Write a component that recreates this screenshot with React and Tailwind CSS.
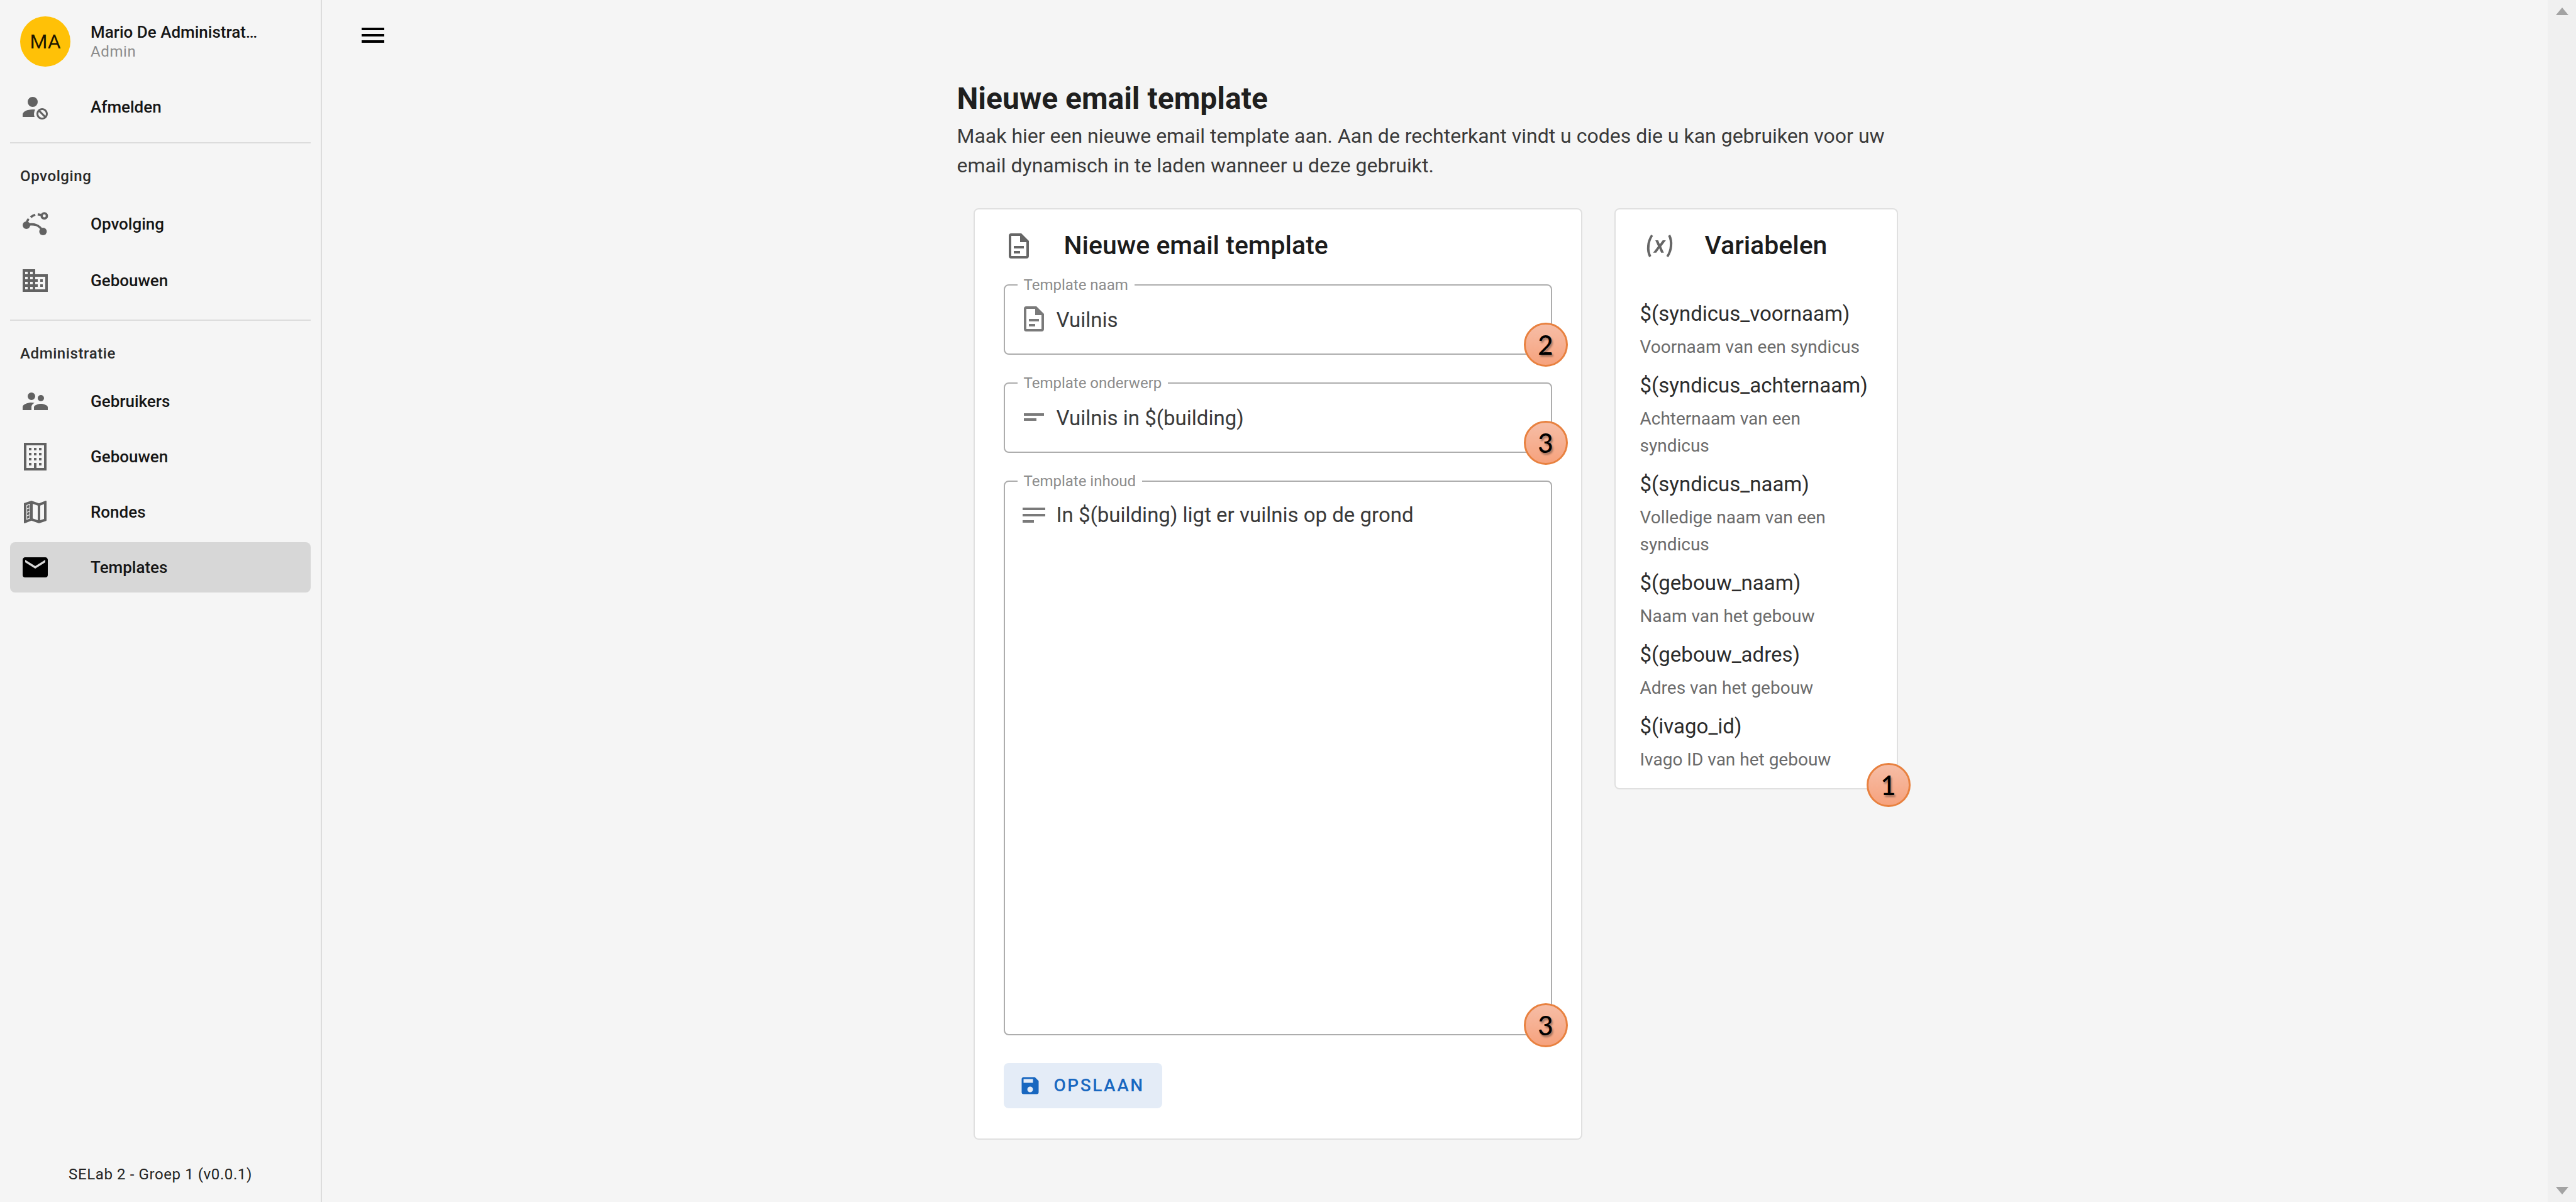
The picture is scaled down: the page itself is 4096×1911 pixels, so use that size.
import { useState } from "react";

const paths = {
  menu: "M3,6H21V8H3V6M3,11H21V13H3V11M3,16H21V18H3V16Z",
  accountCancel:
    "M10 4A4 4 0 0 0 6 8A4 4 0 0 0 10 12A4 4 0 0 0 14 8A4 4 0 0 0 10 4M17.5 13C15 13 13 15 13 17.5C13 20 15 22 17.5 22C20 22 22 20 22 17.5C22 15 20 13 17.5 13M10 14C5.58 14 2 15.79 2 18V20H11.5A6.5 6.5 0 0 1 11 17.5A6.5 6.5 0 0 1 11.95 14.14C11.32 14.06 10.68 14 10 14M17.5 14.5C19.16 14.5 20.5 15.84 20.5 17.5C20.5 18.06 20.35 18.58 20.08 19L16 14.92C16.42 14.65 16.94 14.5 17.5 14.5M14.92 16L19 20.08C18.58 20.35 18.06 20.5 17.5 20.5C15.84 20.5 14.5 19.16 14.5 17.5C14.5 16.94 14.65 16.42 14.92 16Z",
  domain:
    "M18,15H16V17H18M18,11H16V13H18M20,19H12V17H14V15H12V13H14V11H12V9H20M10,7H8V5H10M10,11H8V9H10M10,15H8V13H10M10,19H8V17H10M6,7H4V5H6M6,11H4V9H6M6,15H4V13H6M6,19H4V17H6M12,7V3H2V21H22V7H12Z",
  supervisor:
    "M16.5,12A2.5,2.5 0 0,0 19,9.5A2.5,2.5 0 0,0 16.5,7A2.5,2.5 0 0,0 14,9.5A2.5,2.5 0 0,0 16.5,12M9,11A3,3 0 0,0 12,8A3,3 0 0,0 9,5A3,3 0 0,0 6,8A3,3 0 0,0 9,11M16.5,14C14.67,14 11,14.92 11,16.75V19H22V16.75C22,14.92 18.33,14 16.5,14M9,13C6.67,13 2,14.17 2,16.5V19H9V16.75C9,15.9 9.33,14.41 11.37,13.28C10.5,13.1 9.66,13 9,13Z",
  office:
    "M3 1H21V23H3V1M5 3V21H11V17H13V21H19V3H5M7 5H9V7H7V5M11 5H13V7H11V5M15 5H17V7H15V5M7 9H9V11H7V9M11 9H13V11H11V9M15 9H17V11H15V9M7 13H9V15H7V13M11 13H13V15H11V13M15 13H17V15H15V13M7 17H9V19H7V17M15 17H17V19H15V17Z",
  map: "M9,3L3.36,4.9C3.15,4.97 3,5.15 3,5.38V20.5A0.5,0.5 0 0,0 3.5,21L3.66,20.97L9,18.9L15,21L20.64,19.1C20.85,19.03 21,18.85 21,18.62V3.5A0.5,0.5 0 0,0 20.5,3L20.34,3.03L15,5.1L9,3M8,5.45V17.15L5,18.31V6.46L8,5.45M10,5.47L14,6.87V18.53L10,17.13V5.47M19,5.7V17.54L16,18.55V6.86L19,5.7M7.46,6.3L5.57,6.97V9.12L7.46,8.45V6.3M7.46,9.05L5.57,9.72V11.87L7.46,11.2V9.05M7.46,11.8L5.57,12.47V14.61L7.46,13.95V11.8M7.46,14.55L5.57,15.22V17.37L7.46,16.7V14.55Z",
  email:
    "M20,8L12,13L4,8V6L12,11L20,6M20,4H4C2.89,4 2,4.89 2,6V18A2,2 0 0,0 4,20H20A2,2 0 0,0 22,18V6C22,4.89 21.1,4 20,4Z",
  document:
    "M6,2A2,2 0 0,0 4,4V20A2,2 0 0,0 6,22H18A2,2 0 0,0 20,20V8L14,2H6M6,4H13V9H18V20H6V4M8,12V14H16V12H8M8,16V18H13V16H8Z",
  variable:
    "M20.41,3C21.8,5.71 22.35,8.84 22,12C21.8,15.16 20.7,18.29 18.83,21L17.3,20C18.91,17.57 19.85,14.8 20,12C20.34,9.2 19.89,6.43 18.7,4L20.41,3M5.17,3L6.7,4C5.09,6.43 4.15,9.2 4,12C3.66,14.8 4.12,17.57 5.3,20L3.61,21C2.21,18.29 1.65,15.17 2,12C2.2,8.84 3.3,5.71 5.17,3M12.08,10.68L14.4,7.45H16.93L13.15,12.45L15.35,17.37H13.09L11.71,14L9.28,17.33H6.76L10.66,12.21L8.53,7.45H10.8L12.08,10.68Z",
  textShort: "M4,9H20V11H4V9M4,13H14V15H4V13Z",
  text: "M21,6V8H3V6H21M3,18H12V16H3V18M3,13H21V11H3V13Z",
  save: "M15,9H5V5H15M12,19A3,3 0 0,1 9,16A3,3 0 0,1 12,13A3,3 0 0,1 15,16A3,3 0 0,1 12,19M17,3H5C3.89,3 3,3.9 3,5V19A2,2 0 0,0 5,21H19A2,2 0 0,0 21,19V7L17,3Z",
};

function Icon({ name, className = "size-12" }) {
  return (
    <svg viewBox="0 0 24 24" fill="currentColor" fillRule="evenodd" aria-hidden="true" className={`shrink-0 ${className}`}>
      <path d={paths[name]} />
    </svg>
  );
}

function RouteIcon() {
  return (
    <svg viewBox="0 0 24 24" fill="none" stroke="currentColor" strokeWidth="1.8" aria-hidden="true" className="size-12 shrink-0">
      <circle cx="5" cy="13" r="3" fill="currentColor" stroke="none" />
      <circle cx="18.2" cy="18" r="3" fill="currentColor" stroke="none" />
      <circle cx="19.2" cy="5.6" r="2.1" />
      <path d="M5 12.800C11 11.600 15 12.500 17.800 17.500M5.400 10.500Q5.800 9 6.800 8M8.400 6.700Q10 5.300 12 4.700M14 4.400L17.200 5" />
    </svg>
  );
}

function NavItem({ icon, label, active = false }) {
  return (
    <li>
      <a
        href="#"
        aria-current={active ? "page" : undefined}
        className={`flex h-20 items-center gap-16 rounded-lg px-4 ${active ? "bg-[#d7d7d7]" : ""}`}
      >
        <span className={`flex ${active ? "text-black" : "text-[#626262]"}`}>
          {icon === "route" ? <RouteIcon /> : <Icon name={icon} />}
        </span>
        <span className="text-[26px] font-medium text-[#161616]">{label}</span>
      </a>
    </li>
  );
}

function Sidebar() {
  return (
    <aside className="flex w-128 shrink-0 flex-col border-r-2 border-[#dcdcdc] px-4 pt-[26px] pb-[28px]">
      <div className="flex h-20 items-center gap-8 px-4">
        <div className="flex size-20 shrink-0 items-center justify-center rounded-full bg-[#ffc107] text-[32px] text-[#1c1600]">
          MA
        </div>
        <div>
          <p className="text-[26px] leading-8 font-medium whitespace-nowrap text-[#161616]">Mario De Administrat…</p>
          <p className="text-2xl leading-[30px] tracking-wide text-[#8c8c8c]">Admin</p>
        </div>
      </div>
      <nav className="flex flex-col">
        <ul className="mt-6">
          <NavItem icon="accountCancel" label="Afmelden" />
        </ul>
        <hr className="mt-4 border-t-2 border-[#dcdcdc]" />
        <h2 className="mt-8 px-4 text-2xl leading-10 font-medium tracking-wide text-[#2a2a2a]">Opvolging</h2>
        <ul className="mt-4 flex flex-col gap-[10px]">
          <NavItem icon="route" label="Opvolging" />
          <NavItem icon="domain" label="Gebouwen" />
        </ul>
        <hr className="mt-[22px] border-t-2 border-[#dcdcdc]" />
        <h2 className="mt-8 px-4 text-2xl leading-10 font-medium tracking-wide text-[#2a2a2a]">Administratie</h2>
        <ul className="mt-4 flex flex-col gap-2">
          <NavItem icon="supervisor" label="Gebruikers" />
          <NavItem icon="office" label="Gebouwen" />
          <NavItem icon="map" label="Rondes" />
          <NavItem icon="email" label="Templates" active />
        </ul>
      </nav>
      <p className="mt-auto text-center text-2xl tracking-wide text-[#222222]">SELab 2 - Groep 1 (v0.0.1)</p>
    </aside>
  );
}

function Badge({ value, place }) {
  return (
    <span
      className={`absolute flex size-[70px] items-center justify-center rounded-full border-3 border-[#e8813f] bg-linear-to-b from-[#f6bda6] to-[#f6a27d] font-['Lato',sans-serif] text-[42px] font-medium text-black text-shadow-[2px_3px_3px_rgba(0,0,0,0.35)] ${place}`}
    >
      {value}
    </span>
  );
}

function Field({ id, label, icon, badge, multiline = false, defaultValue }) {
  const [value, setValue] = useState(defaultValue);
  const shared = {
    id,
    value,
    onChange: (event) => setValue(event.target.value),
  };
  return (
    <div className="relative flex rounded-lg border-2 border-[#adadad] pl-[22px]">
      <label htmlFor={id} className="absolute -top-4 left-[20px] bg-white px-[10px] text-2xl leading-[30px] text-[#8c8c8c]">
        {label}
      </label>
      <span className="mt-[29px] flex h-12 text-[#7a7a7a]">
        <Icon name={icon} />
      </span>
      {multiline ? (
        <textarea {...shared} rows={17} className="h-[878px] min-w-0 grow resize-none bg-transparent pt-[29px] pr-12 pl-3 text-[33px] leading-12 text-[#3a3a3a] outline-none" />
      ) : (
        <input {...shared} type="text" className="h-[108px] min-w-0 grow bg-transparent pr-12 pl-3 text-[33px] text-[#3a3a3a] outline-none" />
      )}
      <Badge value={badge} place="-right-[27px] -bottom-[21px]" />
    </div>
  );
}

function CardHeader({ icon, title }) {
  return (
    <div className="flex h-[116px] items-center gap-12">
      <span className="flex text-[#666666]">
        <Icon name={icon} />
      </span>
      <h2 className="text-[41px] font-medium text-[#1c1c1c]">{title}</h2>
    </div>
  );
}

const variables = [
  ["$(syndicus_voornaam)", "Voornaam van een syndicus"],
  ["$(syndicus_achternaam)", "Achternaam van een syndicus"],
  ["$(syndicus_naam)", "Volledige naam van een syndicus"],
  ["$(gebouw_naam)", "Naam van het gebouw"],
  ["$(gebouw_adres)", "Adres van het gebouw"],
  ["$(ivago_id)", "Ivago ID van het gebouw"],
];

function ScrollRail() {
  return (
    <div aria-hidden="true" className="flex w-[45px] shrink-0 flex-col items-center justify-between bg-[#f0f0f0] py-3">
      <svg viewBox="0 0 20 12" className="h-3 w-5" fill="#a3a3a3">
        <path d="M10 0L20 12H0Z" />
      </svg>
      <svg viewBox="0 0 20 12" className="h-3 w-5" fill="#a3a3a3">
        <path d="M0 0H20L10 12Z" />
      </svg>
    </div>
  );
}

export default function App() {
  return (
    <div className="flex min-h-screen bg-[#f5f5f5] font-['Roboto',sans-serif]">
      <Sidebar />
      <main className="min-w-0 grow">
        <header className="flex h-[121px] items-start px-[57px] pt-8">
          <button type="button" aria-label="Menu" className="flex text-black">
            <Icon name="menu" />
          </button>
        </header>
        <div className="mx-auto max-w-[1520px]">
          <h1 className="text-5xl leading-[72px] font-bold text-[#1f1f1f]">Nieuwe email template</h1>
          <p className="text-[32px] leading-[47px] text-[#3a3a3a]">
            Maak hier een nieuwe email template aan. Aan de rechterkant vindt u codes die u kan gebruiken voor uw email
            dynamisch in te laden wanneer u deze gebruikt.
          </p>
          <div className="mt-11 flex items-start gap-[51px] pr-6 pl-[26px]">
            <form className="min-w-0 grow rounded-lg border-2 border-[#e0e0e0] bg-white px-[46px] pb-12">
              <CardHeader icon="document" title="Nieuwe email template" />
              <div className="mt-[3px] flex flex-col gap-11">
                <Field id="name" label="Template naam" icon="document" badge="2" defaultValue="Vuilnis" />
                <Field id="subject" label="Template onderwerp" icon="textShort" badge="3" defaultValue="Vuilnis in $(building)" />
                <Field
                  id="content"
                  label="Template inhoud"
                  icon="text"
                  badge="3"
                  multiline
                  defaultValue="In $(building) ligt er vuilnis op de grond"
                />
              </div>
              <button
                type="button"
                className="mt-11 flex h-18 items-center gap-5 rounded-lg bg-[#e4ecf7] pr-7 pl-6 text-[28px] font-medium tracking-[0.09em] text-[#1867c0]"
              >
                <Icon name="save" className="size-9" />
                OPSLAAN
              </button>
            </form>
            <section className="relative w-[451px] shrink-0 rounded-lg border-2 border-[#e0e0e0] bg-white pb-4">
              <div className="px-[46px]">
                <CardHeader icon="variable" title="Variabelen" />
              </div>
              <ul className="mt-[18px] pr-10 pl-[39px]">
                {variables.map(([code, description]) => (
                  <li key={code} className="py-2">
                    <p className="text-[33px] leading-12 whitespace-nowrap text-[#2c2c2c]">{code}</p>
                    <p className="mt-[7px] text-[28px] leading-[43px] text-[#6b6b6b]">{description}</p>
                  </li>
                ))}
              </ul>
              <Badge value="1" place="-right-[22px] -bottom-[30px]" />
            </section>
          </div>
        </div>
      </main>
      <ScrollRail />
    </div>
  );
}
